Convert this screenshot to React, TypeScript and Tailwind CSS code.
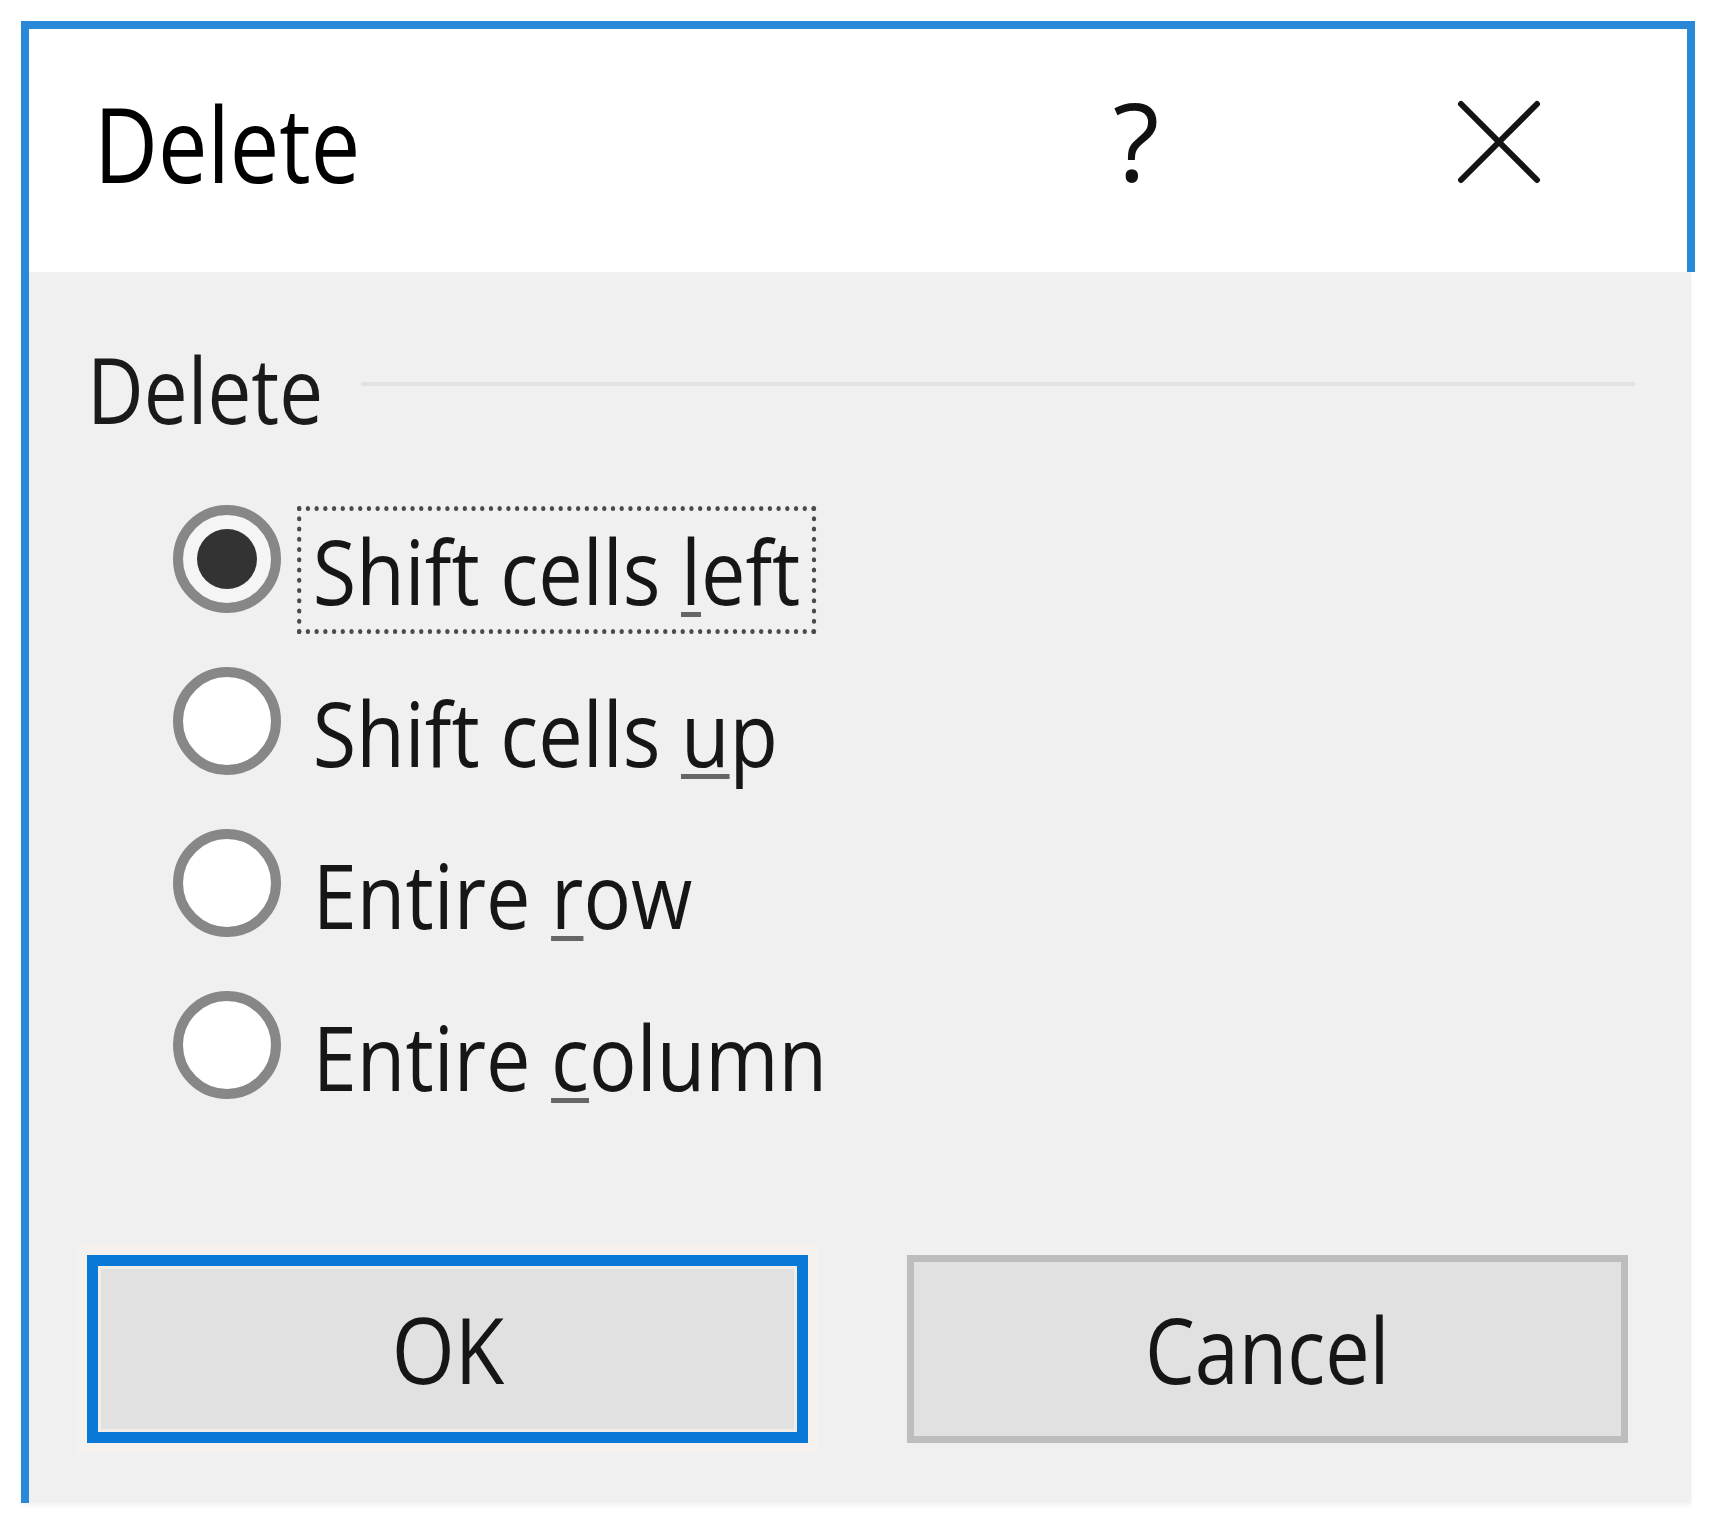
import React from 'react';

const font = "font-['Open_Sans','Noto_Sans',sans-serif]";

interface RadioRowProps {
  checked?: boolean;
  children: React.ReactNode;
}

function RadioRow({ checked, children }: RadioRowProps) {
  return (
    <div className="flex h-[162px] items-center">
      {/* radio circle */}
      <div
        className={
          'ml-[91px] -mt-[10px] flex h-[108px] w-[108px] shrink-0 items-center justify-center rounded-full border-[10px] border-[#878787] ' +
          (checked ? 'bg-[#f5f5f5]' : 'bg-white')
        }
      >
        {checked && <div className="h-[60px] w-[60px] rounded-full bg-[#333333]" />}
      </div>
      {/* label, with focus rect on the checked one */}
      <div
        className={
          'ml-[16px] mt-[11px] origin-left scale-x-[0.88] border-[5px] px-[13px] py-[14px] ' +
          (checked ? 'border-dotted border-[#4a4a4a]' : 'border-transparent')
        }
      >
        <span className="block whitespace-nowrap text-[90px] font-medium leading-[90px] text-[#161616]">{children}</span>
      </div>
    </div>
  );
}

function Key({ children }: { children: React.ReactNode }) {
  return (
    <span className="underline decoration-[#666] decoration-[5px] underline-offset-[7px]">{children}</span>
  );
}

export default function App() {
  return (
    <div className={`min-h-screen bg-white ${font}`}>
      <div className="ml-[21px] pt-[21px] w-[1674px]">
        {/* Title bar */}
        <div className="flex h-[251px] items-start border-x-[8px] border-t-[8px] border-[#2a88d8] bg-white">
          <span className="ml-[65px] mt-[61px] origin-left scale-x-[0.84] whitespace-nowrap text-[105px] font-medium leading-[105px] text-black">
            Delete
          </span>
          <div className="ml-auto mt-[58px] w-[92px] text-center text-[108px] font-medium leading-[108px] text-[#111]">?</div>
          <div className="ml-[275px] mr-[146px] mt-[71px]">
            <svg width="84" height="84" viewBox="0 0 84 84">
              <path d="M4 4 L80 80 M80 4 L4 80" stroke="#141414" strokeWidth="6" strokeLinecap="round" fill="none" />
            </svg>
          </div>
        </div>

        {/* Body */}
        <div className="mr-[4px] flex flex-col border-l-[8px] border-[#2a88d8] bg-[#f0f0f0] pb-[60px] pl-[53px] pr-[56px] pt-[71px] shadow-[0_3px_4px_rgba(0,0,0,0.05)]">
          {/* Group label + etched line */}
          <div className="flex items-start">
            <span className="ml-[5px] origin-left scale-x-[0.85] whitespace-nowrap text-[92px] font-medium leading-[92px] text-[#1a1a1a]">
              Delete
            </span>
            <div className="-ml-[4px] mt-[39px] h-[4px] flex-1 bg-[#e2e2e2]" />
          </div>

          <div className="mt-[48px] flex flex-col">
            <RadioRow checked>
              Shift cells <Key>l</Key>eft
            </RadioRow>
            <RadioRow>
              Shift cells <Key>u</Key>p
            </RadioRow>
            <RadioRow>
              Entire <Key>r</Key>ow
            </RadioRow>
            <RadioRow>
              Entire <Key>c</Key>olumn
            </RadioRow>
          </div>

          {/* Buttons */}
          <div className="ml-[5px] mt-[124px] flex gap-[99px]">
            <button className="flex h-[188px] w-[721px] items-center justify-center border-[11px] border-[#0a78d6] bg-[#e1e1e1] shadow-[inset_0_0_0_3px_#f2ede7,0_0_0_10px_#f4f1ee]">
              <span className="scale-x-[0.88] text-[92px] font-medium leading-[92px] text-[#161616]">OK</span>
            </button>
            <button className="flex h-[188px] w-[721px] items-center justify-center border-[7px] border-[#bdbdbd] bg-[#e1e1e1]">
              <span className="scale-x-[0.86] text-[92px] font-medium leading-[92px] text-[#161616]">Cancel</span>
            </button>
          </div>
        </div>
      </div>
    </div>
  );
}
